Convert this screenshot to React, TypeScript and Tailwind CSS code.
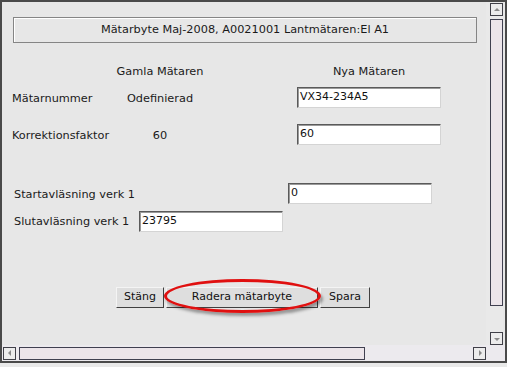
import React from 'react';

const font = { fontFamily: '"DejaVu Sans", Verdana, sans-serif' };

function Field({ value, width = 'w-[144px]' }: { value: string; width?: string }) {
  return (
    <div
      className={`${width} h-[21px] bg-white border border-t-[#5a5a5a] border-l-[#5a5a5a] border-r-[#d4d4d4] border-b-[#d4d4d4] shadow-[inset_1px_1px_0_#9a9a9a] flex items-center pl-[2px] text-[11px] text-[#111]`}
    >
      {value}
    </div>
  );
}

function Btn({ label, width }: { label: string; width: string }) {
  return (
    <div
      className={`${width} h-[21px] bg-[#dedede] border border-t-[#f4f4f4] border-l-[#f4f4f4] border-r-[#404040] border-b-[#404040] flex items-center justify-center text-[11px] text-[#111]`}
    >
      {label}
    </div>
  );
}

function Arrow({ dir }: { dir: 'up' | 'down' | 'left' | 'right' }) {
  const pts = {
    up: '2,6 5,3 8,6',
    down: '2,4 5,7 8,4',
    left: '6,2 3,5 6,8',
    right: '4,2 7,5 4,8',
  }[dir];
  return (
    <div className="w-[13px] h-[13px] border border-[#404048] bg-[#ececec] flex items-center justify-center">
      <svg width="10" height="10" viewBox="0 0 10 10">
        <polygon points={pts} fill="#8a8a8a" />
      </svg>
    </div>
  );
}

export default function App() {
  return (
    <div className="w-[507px] h-[367px] bg-[#e9e9e9]" style={font}>
      <div className="w-[507px] h-[363px] border-l-2 border-t-2 border-r-2 border-b-2 border-[#4a4a4a] bg-[#e7e7e7] flex flex-col">
        <div className="flex flex-1">
          {/* main content */}
          <div className="flex-1 flex flex-col text-[11.3px] text-[#1a1a1a]">
            <div className="ml-[11px] mt-[15px] w-[464px] h-[26px] border border-[#858585] shadow-[inset_1px_1px_0_#fff] flex items-center justify-center">
              Mätarbyte Maj-2008, A0021001 Lantmätaren:El A1
            </div>

            <div className="ml-[10px] mt-[21px] grid grid-cols-[88px_120px_77px_144px] h-[14px] items-center">
              <div />
              <div className="text-center">Gamla Mätaren</div>
              <div />
              <div className="text-center">Nya Mätaren</div>
            </div>

            <div className="ml-[10px] mt-[9px] grid grid-cols-[88px_120px_77px_144px] items-center">
              <div className="whitespace-nowrap pt-[4px]">Mätarnummer</div>
              <div className="text-center pt-[4px]">Odefinierad</div>
              <div />
              <Field value="VX34-234A5" />
            </div>

            <div className="ml-[10px] mt-[16px] grid grid-cols-[88px_120px_77px_144px] items-center">
              <div className="whitespace-nowrap pt-[4px]">Korrektionsfaktor</div>
              <div className="text-center pt-[4px]">60</div>
              <div />
              <Field value="60" />
            </div>

            <div className="ml-[12px] mt-[38px] flex items-center">
              <div className="w-[274px] pt-[3px]">Startavläsning verk 1</div>
              <Field value="0" />
            </div>

            <div className="ml-[12px] mt-[7px] flex items-center">
              <div className="w-[125px] whitespace-nowrap pt-[2px]">Slutavläsning verk 1</div>
              <Field value="23795" />
            </div>

            <div className="ml-[114px] mt-[55px] flex gap-[2px] relative">
              <Btn label="Stäng" width="w-[48px]" />
              <Btn label="Radera mätarbyte" width="w-[152px]" />
              <Btn label="Spara" width="w-[50px]" />
              <div className="absolute left-[48px] top-[-8px] w-[157px] h-[34px] rounded-[50%] border-[3px] border-[#e01010] shadow-[2px_3px_3px_rgba(0,0,0,0.35)] pointer-events-none" />
            </div>
          </div>

          {/* vertical scrollbar */}
          <div className="w-[17px] mr-[2px] flex flex-col items-end pt-[1px] bg-[#e9e9e9]">
            <Arrow dir="up" />
            <div className="mt-[3px] w-[13px] h-[287px] border border-[#404050] bg-[#ece5ea]" />
            <div className="flex-1" />
            <Arrow dir="down" />
          </div>
        </div>

        {/* horizontal scrollbar */}
        <div className="h-[16px] flex items-center pl-[1px] bg-[#eceaee]">
          <Arrow dir="left" />
          <div className="ml-[3px] w-[346px] h-[13px] border border-[#404050] bg-[#ece5ea]" />
          <div className="flex-1" />
          <div className="mr-[19px]">
            <Arrow dir="right" />
          </div>
        </div>
      </div>
    </div>
  );
}
